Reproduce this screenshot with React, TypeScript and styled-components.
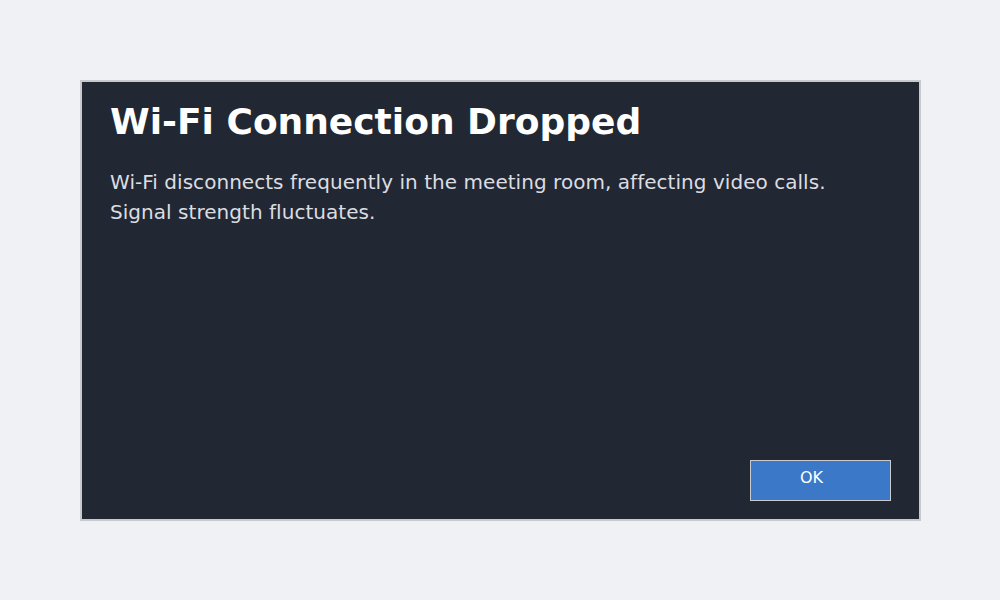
import React from "react";
import styled, { createGlobalStyle } from "styled-components";

const GlobalStyle = createGlobalStyle`
  html, body {
    margin: 0;
    padding: 0;
    background: #f0f1f5;
    font-family: "DejaVu Sans", sans-serif;
  }
`;

const Page = styled.div`
  width: 1000px;
  height: 600px;
  box-sizing: border-box;
  padding: 80px 79px 79px 80px;
`;

const Dialog = styled.div`
  width: 841px;
  height: 441px;
  box-sizing: border-box;
  border: 2px solid #c9cacd;
  background: #222833;
  padding: 18px 28px 18px 28px;
  display: flex;
  flex-direction: column;
`;

const Title = styled.h1`
  margin: 0;
  font-size: 36px;
  line-height: 44px;
  font-weight: bold;
  color: #ffffff;
`;

const Message = styled.p`
  margin: 23px 0 0;
  font-size: 20px;
  line-height: 30px;
  letter-spacing: 0.04px;
  color: #dcdde1;
`;

const Footer = styled.div`
  margin-top: auto;
  display: flex;
  justify-content: flex-end;
`;

const Button = styled.button`
  width: 141px;
  height: 41px;
  box-sizing: border-box;
  border: 1px solid #c9cacd;
  background: #3b78c8;
  color: #ffffff;
  font-family: "DejaVu Sans", sans-serif;
  font-size: 16px;
  line-height: 1;
  padding: 0 18px 5px 0;
  cursor: pointer;
`;

const App: React.FC = () => (
  <>
    <GlobalStyle />
    <Page>
      <Dialog>
        <Title>Wi-Fi Connection Dropped</Title>
        <Message>
          Wi-Fi disconnects frequently in the meeting room, affecting video calls.
          <br />
          Signal strength fluctuates.
        </Message>
        <Footer>
          <Button>OK</Button>
        </Footer>
      </Dialog>
    </Page>
  </>
);

export default App;
